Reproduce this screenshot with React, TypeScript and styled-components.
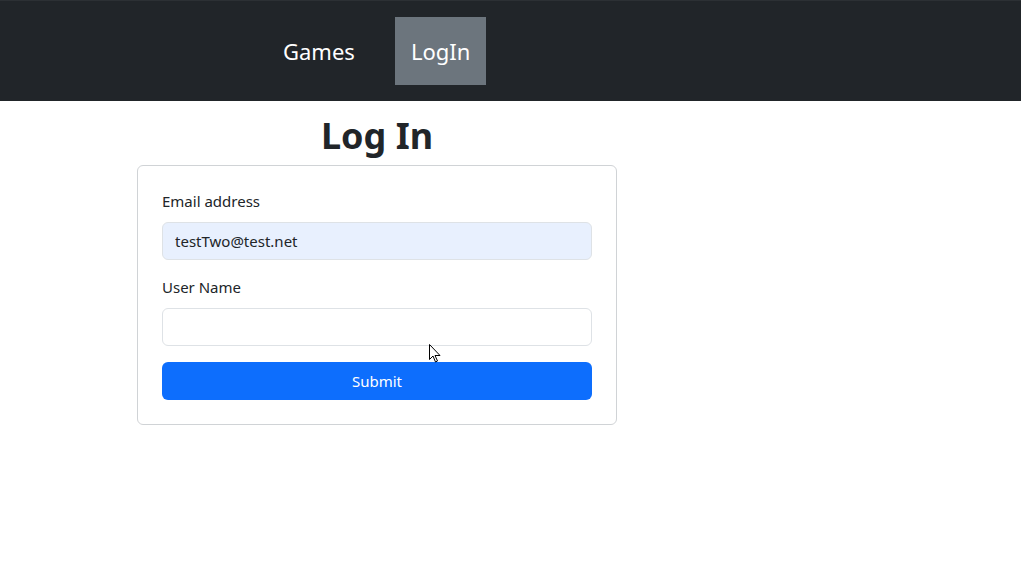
import React from "react";
import styled, { createGlobalStyle } from "styled-components";

const Global = createGlobalStyle`
  html, body { margin: 0; padding: 0; background: #fff; }
  body { font-family: "Noto Sans", "Open Sans", sans-serif; color: #212529; }
  * { box-sizing: border-box; }
`;

const NavBar = styled.nav`
  height: 101px;
  background: #212529;
  border-top: 1px solid #2c3034;
  display: flex;
  align-items: center;
  padding-left: 267px;
  gap: 24px;
`;

const NavLink = styled.a<{ $active?: boolean }>`
  height: 68px;
  display: flex;
  align-items: center;
  padding: 0 16px;
  font-size: 22px;
  color: #fff;
  text-decoration: none;
  background: ${(p) => (p.$active ? "#6c757d" : "transparent")};
`;

const Main = styled.main`
  width: 480px;
  margin-left: 137px;
  display: flex;
  flex-direction: column;
`;

const Title = styled.h1`
  margin: 14px 0 8px;
  text-align: center;
  font-size: 36px;
  font-weight: 700;
  line-height: 42px;
  color: #212529;
`;

const Card = styled.form`
  border: 1px solid #d0d3d6;
  border-radius: 6px;
  padding: 24px 24px 24px;
  display: flex;
  flex-direction: column;
`;

const Field = styled.div`
  display: flex;
  flex-direction: column;
  margin-bottom: 16px;
`;

const Label = styled.label`
  font-size: 15px;
  line-height: 22px;
  margin-bottom: 10px;
  color: #212529;
`;

const Input = styled.input<{ $filled?: boolean }>`
  height: 38px;
  border: 1px solid #dee2e6;
  border-radius: 6px;
  padding: 0 12px;
  font-family: inherit;
  font-size: 15px;
  color: #212529;
  background: ${(p) => (p.$filled ? "#e8f0fe" : "#fff")};
  outline: none;
`;

const Submit = styled.button`
  height: 38px;
  border: none;
  border-radius: 6px;
  background: #0d6efd;
  color: #fff;
  font-family: inherit;
  font-size: 15px;
`;

const Wrapper = styled.div`
  position: relative;
`;

const Cursor = styled.svg`
  position: absolute;
  left: 429px;
  top: 344px;
`;

export default function App() {
  return (
    <Wrapper>
      <Global />
      <NavBar>
        <NavLink href="#">Games</NavLink>
        <NavLink href="#" $active>LogIn</NavLink>
      </NavBar>
      <Main>
        <Title>Log In</Title>
        <Card onSubmit={(e) => e.preventDefault()}>
          <Field>
            <Label>Email address</Label>
            <Input $filled defaultValue="testTwo@test.net" />
          </Field>
          <Field>
            <Label>User Name</Label>
            <Input />
          </Field>
          <Submit type="submit">Submit</Submit>
        </Card>
      </Main>
      <Cursor width="13" height="20" viewBox="0 0 13 20">
        <path d="M0.5 0.5 L0.5 15.5 L4 12 L6.5 18 L8.5 17 L6 11.5 L11 11.5 Z" fill="#fff" stroke="#000" strokeWidth="1" />
      </Cursor>
    </Wrapper>
  );
}
